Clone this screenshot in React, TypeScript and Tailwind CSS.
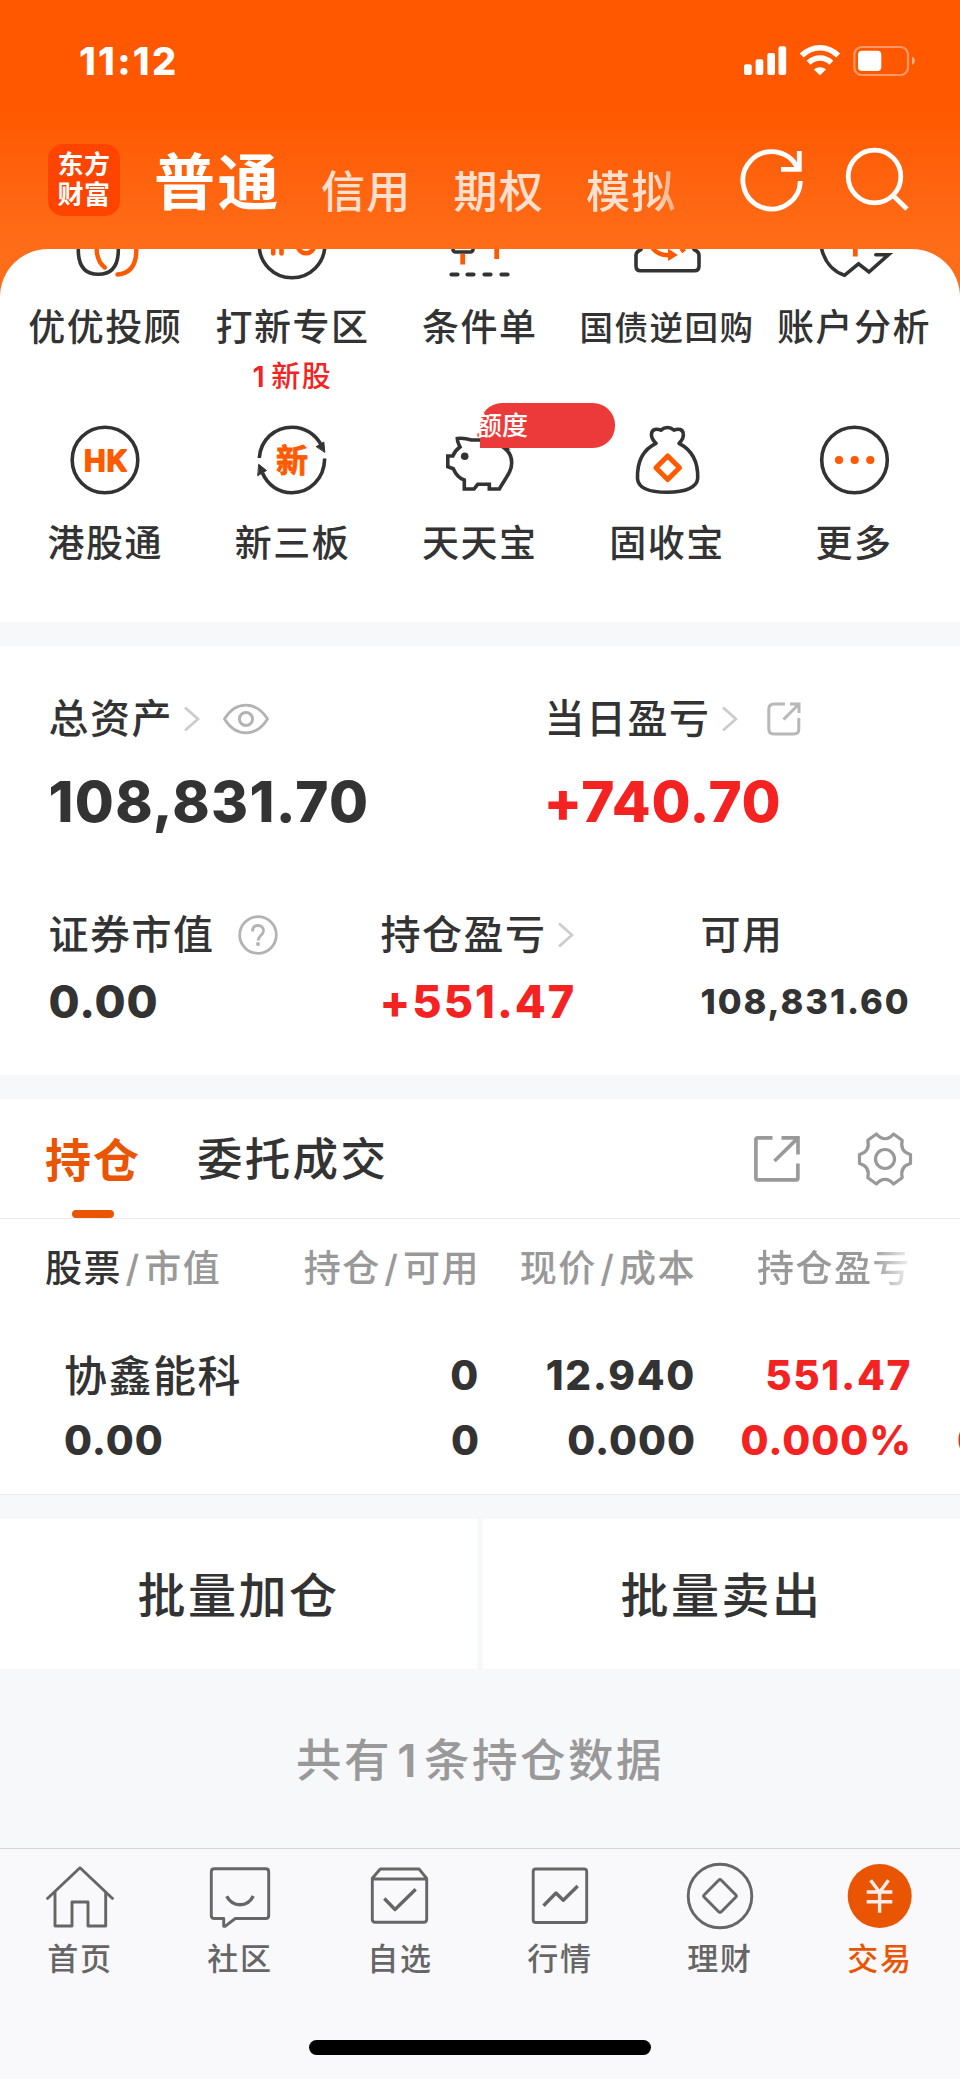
import { clsx } from 'clsx'
import type { ReactNode } from 'react'

const DARK = '#333333'
const ORANGE = '#ff5a00'

function ServiceIcon({ children }: { children: ReactNode }) {
  return (
    <svg
      viewBox="0 0 72 72"
      className="block size-[72px] overflow-visible"
      fill="none"
      stroke={DARK}
      strokeWidth="3.6"
      strokeLinecap="round"
      strokeLinejoin="round"
    >
      {children}
    </svg>
  )
}

const services = [
  {
    label: '优优投顾',
    icon: (
      <>
        <path d="M9.3 30v11C9.3 57 16 65.3 29.3 65.3S49.3 57 49.3 41V30" />
        <path stroke={ORANGE} strokeWidth="4.4" d="M27.7 30v10c0 8 2.5 14 8 18.5M67.3 30v11c0 15-6.5 23.5-18.8 24.5" />
      </>
    ),
  },
  {
    label: '打新专区',
    count: 1,
    note: '新股',
    icon: (
      <>
        <circle cx="36" cy="36" r="32.8" />
        <path stroke={ORANGE} strokeWidth="4.6" d="M17.2 24v20.500M25.500 44.500V24h5.500a5 5 0 0 1 0 11H25.500" />
        <circle cx="50" cy="36" r="8.300" stroke={ORANGE} strokeWidth="4.6" />
      </>
    ),
  },
  {
    label: '条件单',
    icon: (
      <>
        <rect x="9" y="28" width="20" height="15" rx="2.500" />
        <path stroke={ORANGE} strokeWidth="4.8" strokeLinecap="butt" d="M18.700 45v10.500M52.700 30v20" />
        <path strokeWidth="4.2" d="M7.500 65.500h6M23.500 65.500h6M40.500 65.500h6M57.500 65.500h6" />
      </>
    ),
  },
  {
    label: '国债逆回购',
    small: true,
    icon: (
      <>
        <path d="M10 40.500c-3.500 1.500-5 3-5 6V57c0 3 1.500 4.800 4.500 4.800h54c3 0 4.500-1.800 4.500-4.800V46.500c0-3-1.500-4.500-5-6" />
        <path stroke={ORANGE} strokeWidth="4.400" strokeLinecap="butt" d="M21.500 39c3.500 5 8 7.300 17 7.300M50 42.500l3.500-3" />
        <path fill={ORANGE} stroke="none" d="M37 39.500l9.800 6.500L37 52z" />
      </>
    ),
  },
  {
    label: '账户分析',
    icon: (
      <>
        <path d="M3.700 30v10c3 12.500 11 22.500 22.800 26.300l14-11.500L51 63l19.500-17.300H57.800" strokeLinejoin="miter" />
        <path stroke={ORANGE} strokeWidth="4.800" strokeLinecap="butt" d="M37.300 32v15.500" />
      </>
    ),
  },
  {
    label: '港股通',
    icon: (
      <>
        <circle cx="36" cy="36" r="32.800" />
        <text
          x="36.500"
          y="46.700"
          fill={ORANGE}
          stroke={ORANGE}
          strokeWidth="2"
          fontSize="29"
          fontWeight="600"
          textAnchor="middle"
          textLength="43"
          className="font-['Inter',sans-serif]"
        >
          HK
        </text>
      </>
    ),
  },
  {
    label: '新三板',
    icon: (
      <>
        <path strokeLinecap="butt" d="M3.300 34C4.500 15.500 19 3.200 36 3.200c13 0 24 7.500 29.500 18.500M68.700 34.500C68.300 55 53.500 68.800 36 68.800 23 68.800 11.500 61 6.500 49" />
        <path fill={DARK} strokeWidth="1" d="M60.500 22.500l7.300-4.500 1 10zM3 40.500l7.500 6-8.500 5z" />
        <text
          x="36"
          y="47.500"
          fill={ORANGE}
          stroke={ORANGE}
          strokeWidth="0.800"
          fontSize="32"
          fontWeight="700"
          textAnchor="middle"
          className="font-['Noto_Sans_CJK_SC',sans-serif]"
        >
          新
        </text>
      </>
    ),
  },
  {
    label: '天天宝',
    badge: '额度',
    icon: (
      <>
        <path
          strokeLinejoin="miter"
          d="M60 23.700c5.500 4 7.700 9 7.700 15 0 9-6 15-12.400 26.300h-10v-4.700H33.700L30 65h-9.700V56c-6-2-8.500-5.500-11-11.300l-5.500-2v-10.700h5c1.500-4 3.700-6.500 7.200-9-1.500-3-2.700-5-2.700-8.500 6-1 11 .500 14.500 1.500l8 0c12 0 18 4 24.500 7.700z"
        />
        <path stroke={ORANGE} d="M35 11.500v-1" />
        <circle cx="20.700" cy="32.300" r="3.800" fill={DARK} stroke="none" />
      </>
    ),
  },
  {
    label: '固收宝',
    icon: (
      <>
        <path d="M25 19.300c-3-2.800-5-6-4.500-9.500.600-4.600 5-5.600 9.500-3.600 3.700-3.400 9-3.400 13 0 4.500-2 8.800-1 9.300 3.600.500 3.500-1.200 6.700-4.300 9.500 13 6.700 19.300 18 18.700 35-.500 9-12 14-30.400 14S7 63.500 6.500 54.500c-.5-17 5.500-29 18.500-35.200" />
        <path stroke={ORANGE} strokeWidth="5" d="M36.700 32l11.800 11.700-11.800 11.800-11.800-11.800z" />
      </>
    ),
  },
  {
    label: '更多',
    icon: (
      <>
        <circle cx="36.500" cy="36" r="32.800" />
        <g fill={ORANGE} stroke="none">
          <circle cx="21" cy="36" r="4.100" />
          <circle cx="36.700" cy="36" r="4.100" />
          <circle cx="52.300" cy="36" r="4.100" />
        </g>
      </>
    ),
  },
]

const tabs = [
  {
    label: '首页',
    icon: (
      <>
        <path d="M2.700 39.300L36 7.700l33.300 31.600" />
        <path d="M11 32v34h17V42h16v24h17.700V32" />
      </>
    ),
  },
  {
    label: '社区',
    icon: (
      <>
        <path d="M10.300 8.700h51.400q3 0 3 3v43.800q0 3-3 3H31.300L21 66.300h-1.300v-7.800h-9.400q-3 0-3-3V11.700q0-3 3-3z" />
        <path strokeWidth="3.400" strokeLinecap="butt" d="M22.700 36.300c3 5.500 7.500 8.500 13.300 8.500s10.500-3.300 13.300-8.800" />
      </>
    ),
  },
  {
    label: '自选',
    icon: (
      <>
        <path d="M8.300 18.300l8-9.300H55l7.700 9.300v41q0 3-3 3H11.300q-3 0-3-3zM8.300 19h54.400" />
        <path strokeWidth="3.400" strokeLinecap="butt" d="M20.300 38.500L31 49.500l20.700-20.300" />
      </>
    ),
  },
  {
    label: '行情',
    icon: (
      <>
        <rect x="9.200" y="9" width="53.500" height="53.500" rx="2.500" />
        <path strokeWidth="3.400" strokeLinecap="butt" d="M19.500 45.700L32 33l7.300 7.300 14.400-14.300" />
      </>
    ),
  },
  {
    label: '理财',
    icon: (
      <>
        <circle cx="36" cy="36" r="31.800" />
        <path d="M34.700 20.300q1.300-1.300 2.600 0l14.400 14.400q1.300 1.300 0 2.600L37.300 51.700q-1.300 1.300-2.600 0L20.300 37.300q-1.300-1.300 0-2.600z" />
      </>
    ),
  },
  {
    label: '交易',
    active: true,
    icon: (
      <>
        <circle cx="35.700" cy="36" r="32" fill="#ea5504" stroke="none" />
        <path
          stroke="#fbeee8"
          strokeWidth="3.400"
          strokeLinecap="butt"
          strokeLinejoin="miter"
          d="M26.700 20.300l8.900 12 8.900-12M35.600 32v20.700M22.700 32h25.600M22.700 41.700h25.600"
        />
      </>
    ),
  },
]

function Chevron() {
  return (
    <svg viewBox="0 0 16 26" className="h-[26px] w-4" fill="none" stroke="#cccccc" strokeWidth="2.800">
      <path d="M1 1.500L14 13 1 24.500" />
    </svg>
  )
}

function StatusBar() {
  return (
    <div className="flex h-[122px] items-center justify-between pr-[45px] pl-[79px] text-white">
      <span className="text-[38px] leading-[40px] font-extrabold tracking-[2.300px]">11:12</span>
      <svg viewBox="744 44 171 34" className="h-[34px] w-[171px]" fill="white">
        <rect x="744" y="64.300" width="7.700" height="10.700" rx="2" />
        <rect x="755.600" y="59.300" width="7.700" height="15.700" rx="2" />
        <rect x="767.300" y="53" width="7.700" height="22" rx="2" />
        <rect x="778.500" y="46.300" width="7.700" height="28.700" rx="2" />
        <g fill="none" stroke="white" strokeWidth="5.600">
          <path d="M801.700 55.500c10.500-10.400 26-10.400 36.400 0" />
          <path d="M808.600 62.700c6.500-6.300 16.200-6.300 22.700 0" />
        </g>
        <path d="M813.800 69.400c3.500-3 8.800-3 12.200 0L819.900 75.300z" />
        <rect x="854.300" y="47" width="53.700" height="28" rx="7.500" fill="none" stroke="white" strokeWidth="2.200" opacity="0.400" />
        <rect x="858" y="50.700" width="23.300" height="20.300" rx="4" />
        <path d="M912 56.500q3 1.500 3 4.300t-3 4.300z" opacity="0.500" />
      </svg>
    </div>
  )
}

function Header() {
  return (
    <header className="h-[249px] bg-linear-to-b from-[#ff5800] from-45% to-[#ff6d18]">
      <StatusBar />
      <div className="flex h-[116px] items-center pl-12">
        <div className="flex size-[72px] flex-col items-center justify-center rounded-[15px] bg-[#ff4400] text-[26px] leading-[30px] font-bold tracking-[0.500px] text-white">
          <span>东方</span>
          <span>财富</span>
        </div>
        <nav className="ml-[34px] flex h-full items-center whitespace-nowrap text-white">
          <span className="w-[167px] pt-[5px] text-[61px] leading-[80px] font-bold tracking-[2.500px]">普通</span>
          <div className="flex pt-[23px] text-[44px] leading-[60px] font-medium tracking-[1.200px] text-white/80">
            <span className="w-[132.500px]">信用</span>
            <span className="w-[132.500px]">期权</span>
            <span className="mask-r-from-75% mask-r-to-130%">模拟</span>
          </div>
        </nav>
        <svg viewBox="740 147 170 66" className="mr-[50px] ml-auto h-[66px] w-[170px]" fill="none" stroke="white" strokeWidth="4.800">
          <path d="M800.300 181a28.700 28.700 0 1 1-3-13.500" />
          <path d="M799.300 151v18.300H781" />
          <circle cx="874.500" cy="176.500" r="26.300" />
          <path d="M893 195.500l14 13.500" />
        </svg>
      </div>
    </header>
  )
}

function Services() {
  return (
    <div className="bg-[#ff6d18]">
      <div className="h-[373px] overflow-hidden rounded-t-[48px] bg-white">
        <div className="-mt-[40.500px] grid auto-rows-[215.500px] grid-cols-5 pr-[12.300px] pl-[11.700px]">
          {services.map((s) => (
            <div key={s.label} className="relative flex flex-col items-center whitespace-nowrap">
              <ServiceIcon>{s.icon}</ServiceIcon>
              <span
                className={clsx(
                  'mt-[27.500px] leading-[40px] font-medium text-[#333]',
                  s.small ? 'text-[33.500px] tracking-[1.500px]' : 'text-[37px] tracking-[1.500px]',
                )}
              >
                {s.label}
              </span>
              {s.note && (
                <span className="mt-[13.500px] text-[29px] leading-[30px] font-medium tracking-[1.500px] text-[#f52222]">
                  <span className="mr-[5px] font-semibold">{s.count}</span>
                  {s.note}
                </span>
              )}
              {s.badge && (
                <span className="absolute -top-[21px] left-[94px] flex h-[45px] w-[135px] items-center rounded-[22px] rounded-bl-none bg-[#ec3a3a] text-[26px] leading-[30px] font-medium text-white">
                  <span className="-ml-[4px]">{s.badge}</span>
                </span>
              )}
            </div>
          ))}
        </div>
      </div>
    </div>
  )
}

function Assets() {
  return (
    <section className="mt-6 h-[429px] bg-white pl-[48.500px] text-[40px] font-medium tracking-[1.500px] text-[#333]">
      <div className="flex pt-[48.500px]">
        <div className="w-[496px]">
          <div className="flex h-12 items-center">
            总资产
            <span className="ml-[11px]">
              <Chevron />
            </span>
            <svg viewBox="0 0 46 32" className="ml-[22.500px] h-8 w-[46px]" fill="none" stroke="#b3b3b3" strokeWidth="2.800">
              <path d="M1.500 16C7 7 14 2.200 23 2.200S39 7 44.500 16C39 25 32 29.800 23 29.800S7 25 1.500 16z" />
              <circle cx="23" cy="16" r="6.600" strokeWidth="3" />
            </svg>
          </div>
          <div className="mt-7 text-[56.500px] leading-[61px] font-extrabold tracking-[1.300px]">108,831.70</div>
        </div>
        <div>
          <div className="flex h-12 items-center">
            当日盈亏
            <span className="ml-[11px]">
              <Chevron />
            </span>
            <svg viewBox="0 0 34 34" className="ml-[29px] size-[34px]" fill="none" stroke="#b8b8b8" strokeWidth="3">
              <path d="M18 2H7Q1.800 2 1.800 7v20q0 5 5 5h20q5 0 5-5V16M23 2h9v9M32 2L16.500 17.500" />
            </svg>
          </div>
          <div className="mt-7 -ml-px text-[56.500px] leading-[61px] font-extrabold tracking-[0.700px] text-[#f52222]">+740.70</div>
        </div>
      </div>
      <div className="mt-[79px] flex">
        <div className="w-[332px]">
          <div className="flex h-12 items-center">
            证券市值
            <svg viewBox="0 0 40 40" className="ml-[23.500px] size-10" fill="none" stroke="#b3b3b3" strokeWidth="2.800">
              <circle cx="20" cy="20" r="18.300" />
              <path d="M14.500 16.500c0-3.800 2.200-6 5.500-6s5.500 2.200 5.500 5.300c0 4.400-5.400 4.700-5.400 9.700" />
              <circle cx="20" cy="29" r="2" fill="#b3b3b3" stroke="none" />
            </svg>
          </div>
          <div className="mt-[18.500px] text-[45px] leading-[50px] font-extrabold tracking-[0.900px]">0.00</div>
        </div>
        <div className="w-80">
          <div className="flex h-12 items-center">
            持仓盈亏
            <span className="ml-[11px]">
              <Chevron />
            </span>
          </div>
          <div className="mt-[18.500px] -ml-px text-[45px] leading-[50px] font-extrabold tracking-[2px] text-[#f52222]">+551.47</div>
        </div>
        <div>
          <div className="flex h-12 items-center">可用</div>
          <div className="mt-[18.500px] text-[34.500px] leading-[50px] font-extrabold tracking-[1.900px]">108,831.60</div>
        </div>
      </div>
    </section>
  )
}

const rows = [
  ['协鑫能科', '0', '12.940', '551.47', '551.47'],
  ['0.00', '0', '0.000', '0.000%', '0.000%'],
]

function Positions() {
  return (
    <section className="mt-6 h-[396px] overflow-hidden border-b border-[#e8e8e8] bg-white text-[#333]">
      <div className="flex h-[120px] items-center border-b border-[#ececec] pr-[47px] pl-[45px] tracking-[2px]">
        <div className="relative flex h-full items-center pt-[3px] text-[46px] font-bold text-[#ea5504]">
          持仓
          <span className="absolute bottom-0 left-[27px] h-2 w-[42px] rounded bg-[#ea5504]" />
        </div>
        <span className="ml-[56px] pt-[4px] text-[45.500px] font-medium tracking-[2.300px]">委托成交</span>
        <svg viewBox="0 0 46 46" className="mr-[57px] ml-auto size-[46px]" fill="none" stroke="#999999" strokeWidth="3.600">
          <path d="M18.500 1.900H3.500q-1.600 0-1.600 1.600v38.800q0 1.600 1.600 1.600h38.800q1.600 0 1.600-1.600V27.500M27.500 1.900H44v16.600M43.500 2.400L20.500 25" />
        </svg>
        <svg viewBox="0 0 56 56" className="size-[56px]" fill="none" stroke="#999999" strokeWidth="3.200" strokeLinejoin="round">
          <path d="M10.800 9.300L19.500 3c5 6.300 12 6.300 17 0l8.700 6.300C43.500 17 46 21.500 53.500 23.500v9C46 34.500 43.500 39 45.200 46.700L36.500 53c-5-6.300-12-6.300-17 0l-8.700-6.300C12.500 39 10 34.500 2.500 32.500v-9C10 21.500 12.500 17 10.800 9.300z" />
          <circle cx="28" cy="28" r="9.500" />
        </svg>
      </div>
      <div className="flex h-[98px] items-center pt-[2px] pl-[45px] text-[37px] font-medium tracking-[1.500px] whitespace-nowrap text-[#999]">
        <span className="w-[218px]">
          <span className="text-[#333]">股票</span>
          <span className="mx-[3.500px]">/</span>市值
        </span>
        <span className="w-[217px] text-right">
          持仓<span className="mx-[3.500px]">/</span>可用
        </span>
        <span className="w-[216px] text-right">
          现价<span className="mx-[3.500px]">/</span>成本
        </span>
        <span className="w-[215px] mask-r-from-82% mask-r-to-102% text-right">持仓盈亏</span>
      </div>
      {rows.map((row, i) => (
        <div
          key={i}
          className={clsx(
            'flex h-[65px] items-center text-[40.500px] leading-[65px] font-extrabold whitespace-nowrap',
            i === 0 ? 'mt-[26px] tracking-[1.700px]' : 'tracking-[1px]',
          )}
        >
          <span className={clsx('w-[263px] shrink-0 pl-16', i === 0 && 'pt-[2px] text-[43px] font-medium tracking-[1.500px]')}>
            {row[0]}
          </span>
          <span className="w-[217px] shrink-0 text-right">{row[1]}</span>
          <span className="w-[216px] shrink-0 text-right">{row[2]}</span>
          <span className="w-[216px] shrink-0 text-right text-[#f52222]">{row[3]}</span>
          {i === 1 && <span className="ml-[45px] shrink-0 text-[#f52222]">{row[4]}</span>}
        </div>
      ))}
    </section>
  )
}

function TabBar() {
  return (
    <footer className="flex h-[231px] flex-col border-t border-[#d5d7d9] bg-[#f9f9fb]">
      <div className="grid grid-cols-6 pt-[11px]">
        {tabs.map((t) => (
          <div
            key={t.label}
            className={clsx('flex flex-col items-center', t.active ? 'text-[#ea5504]' : 'text-[#666]')}
          >
            <svg
              viewBox="0 0 72 72"
              className="size-[72px]"
              fill="none"
              stroke="currentColor"
              strokeWidth="2.900"
              strokeLinejoin="round"
            >
              {t.icon}
            </svg>
            <span className="mt-[7px] text-[31px] leading-[40px] font-medium tracking-[1.800px]">{t.label}</span>
          </div>
        ))}
      </div>
      <div className="mx-auto mt-[61px] h-[15px] w-[342px] rounded-full bg-black" />
    </footer>
  )
}

export default function App() {
  return (
    <main className="h-[2079px] w-[960px] overflow-hidden bg-[#f7f8fa] font-['Inter','Noto_Sans_CJK_SC',sans-serif]">
      <Header />
      <Services />
      <Assets />
      <Positions />
      <div className="mt-6 grid grid-cols-2 gap-[6px] text-center text-[48px] font-medium tracking-[2.500px] text-[#333]">
        <button className="h-[150px] bg-white pt-[3px]">批量加仓</button>
        <button className="h-[150px] bg-white pt-[3px]">批量卖出</button>
      </div>
      <p className="h-[179px] text-center text-[45.500px] leading-[183px] font-medium tracking-[2.500px] text-[#999]">
        共有<span className="mx-[5px] font-semibold">1</span>条持仓数据
      </p>
      <TabBar />
    </main>
  )
}
